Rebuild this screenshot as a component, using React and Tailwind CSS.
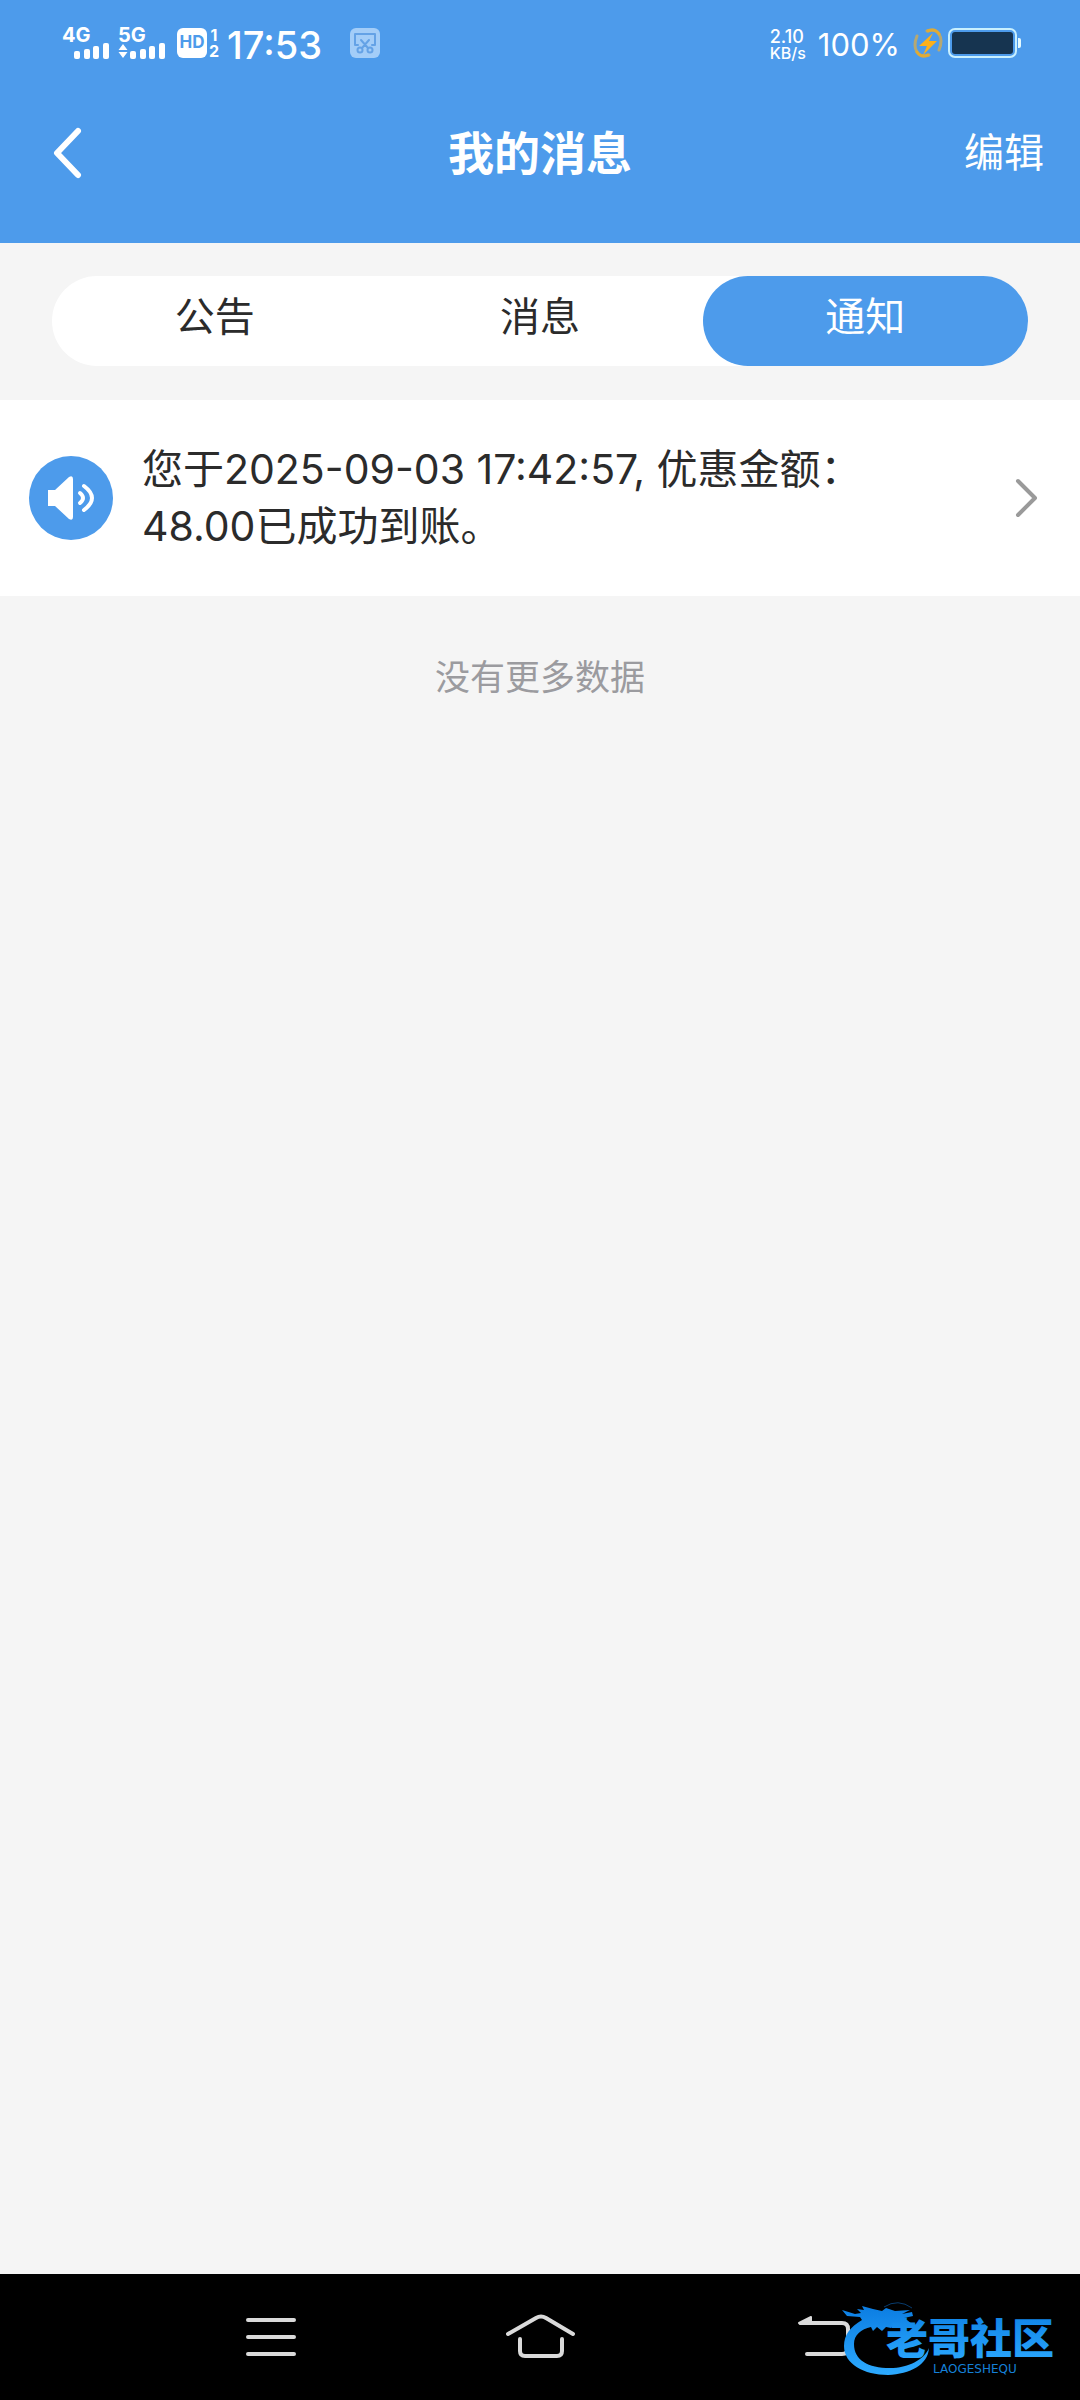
const tabs = ["公告", "消息", "通知"];
const latin = "font-['Inter','Noto_Sans_CJK_SC',sans-serif]";

function Signal({ label, arrows }) {
  return (
    <div className="flex flex-col">
      <span className="h-4 text-[20px] leading-4 font-bold">{label}</span>
      <svg className="h-4 w-12" viewBox="0 0 48 16" fill="currentColor" aria-hidden="true">
        {arrows && <path d="M5 1l4.500 6h-9zM5 15l4.500-6h-9z" />}
        <rect x="12" y="8" width="6" height="8" rx="2" />
        <rect x="22" y="6" width="6" height="10" rx="2" />
        <rect x="31" y="3" width="6" height="13" rx="2" />
        <rect x="41" y="0" width="6" height="16" rx="2" />
      </svg>
    </div>
  );
}

function StatusBar() {
  return (
    <div className="flex h-[86px] items-center justify-between pr-[59px] pl-[62px]">
      <div className="flex items-center">
        <Signal label="4G" />
        <div className="w-2" />
        <Signal label="5G" arrows />
        <span className="ml-[11px] flex size-[30px] items-center justify-center rounded-md bg-white text-[17px] font-bold text-[#4d9beb]">HD</span>
        <span className="ml-[2px] flex flex-col text-center text-[16px] leading-4 font-bold">
          <span>1</span>
          <span>2</span>
        </span>
        <span className="ml-2 pt-1 text-[38px] leading-10 font-medium">17:53</span>
        <svg className="ml-7 size-[30px]" viewBox="0 0 30 30" fill="none" stroke="#64a2e6" strokeWidth="2" strokeLinecap="round" strokeLinejoin="round" aria-hidden="true">
          <rect width="30" height="30" rx="6" fill="#a3cdf8" stroke="none" />
          <path d="M8 17H5V6h20v11h-3M11 12l7 8M19 12l-7 8" />
          <circle cx="10" cy="22" r="2.500" />
          <circle cx="20" cy="22" r="2.500" />
        </svg>
      </div>
      <div className="flex items-center">
        <span className="flex flex-col pt-1 text-[18px] leading-4 font-medium">
          <span>2.10</span>
          <span className="text-[16px]">KB/s</span>
        </span>
        <span className="ml-3 pt-1 text-[31px] leading-10">100%</span>
        <svg className="ml-3 size-8" viewBox="0 0 32 32" fill="none" aria-hidden="true">
          <path d="M15 4Q23 1 27 7t0 16M17 28Q9 31 5 25t0-16" stroke="#b5a873" strokeWidth="3" strokeLinecap="round" />
          <path d="M16 4q7-3 11 3M16 28q-7 3-11-3" stroke="#e0ab35" strokeWidth="3" strokeLinecap="round" />
          <path d="M21 6L7 19h8l-4 9 14-14h-8z" fill="#fcb01b" />
        </svg>
        <svg className="ml-1 h-8 w-[73px]" viewBox="0 0 73 32" fill="none" aria-hidden="true">
          <rect x="1" y="2" width="67" height="28" rx="6" stroke="#c8f0ff" strokeWidth="2" />
          <rect x="4" y="5" width="61" height="22" rx="3" fill="#163450" />
          <path d="M70 11h1q2 0 2 2v6q0 2-2 2h-1z" fill="#e4faff" />
        </svg>
      </div>
    </div>
  );
}

function Watermark() {
  return (
    <div className="pointer-events-none absolute top-6 right-4 h-[78px] w-[224px]">
      <svg className="h-full w-full" viewBox="0 0 224 78" aria-hidden="true">
        <defs>
          <linearGradient id="blue" x1="0" y1="0" x2="0" y2="1">
            <stop offset="0" stopColor="#0b7de2" />
            <stop offset="1" stopColor="#2daaff" />
          </linearGradient>
        </defs>
        <path fill="url(#blue)" d="M22 22C10 29 4 37 4 48 4 66 24 77 48 77 70 76 88 67 89 50 84 62 68 70 50 70 28 70 14 62 14 46 14 37 21 31 31 29L33 33 37 29 42 33 46 29 51 30 53 27 60 25 72 26 67 22 61 22 64 20 73 18 72 14 62 16 70 12 55 13 46 10 42 13 33 11 22 8 24 12 17 11 21 15 15 16 2 12 7 18 20 19z" />
        <path d="M44 9q14-9 28 1" fill="none" stroke="#073b6d" strokeWidth="1" />
        <text x="46" y="56" fill="url(#blue)" fontSize="42" fontWeight="900" fontFamily="'Noto Sans CJK SC', sans-serif">老哥社区</text>
        <text x="93" y="75" fill="#1580d8" fontSize="12" fontFamily="'DejaVu Sans', sans-serif">LAOGESHEQU</text>
      </svg>
    </div>
  );
}

export default function App() {
  return (
    <div className={`flex min-h-screen flex-col bg-[#f5f5f5] text-[#2b2b2b] ${latin}`} lang="zh-CN">
      <header className="h-[243px] bg-[#4d9beb] text-white">
        <StatusBar />
        <div className="grid h-[134px] grid-cols-3 items-center px-9">
          <button type="button" aria-label="返回" className="w-12 pl-4">
            <svg className="h-[52px] w-8" viewBox="0 0 32 52" fill="none" stroke="currentColor" strokeWidth="6" strokeLinecap="round" strokeLinejoin="round">
              <path d="M26 4L5 26l21 22" />
            </svg>
          </button>
          <h1 className="text-center text-[46px] font-bold">我的消息</h1>
          <button type="button" className="justify-self-end text-[40px]">编辑</button>
        </div>
      </header>

      <main className="flex-1">
        <div className="px-[52px] pt-[33px] pb-[34px]">
          <div role="tablist" className="grid h-[90px] grid-cols-3 rounded-full bg-white">
            {tabs.map((tab) => (
              <button
                key={tab}
                type="button"
                role="tab"
                aria-selected={tab === "通知"}
                className="rounded-full pb-2 text-[40px] leading-10 aria-selected:bg-[#4d9beb] aria-selected:text-white"
              >
                {tab}
              </button>
            ))}
          </div>
        </div>

        <button type="button" className="flex h-[196px] w-full items-center bg-white pr-10 pl-7 text-left">
          <svg className="size-[86px] shrink-0" viewBox="0 0 86 86" fill="none" aria-hidden="true">
            <circle cx="43" cy="43" r="42" fill="#4d9beb" />
            <path d="M20 35h7L41 22q4-2 4 2v38q0 4-4 2L27 51h-7z" fill="#fff" />
            <path d="M52 38q6 5 0 10" stroke="#fff" strokeWidth="4" strokeLinecap="round" />
            <path d="M56 31q16 12 0 24" stroke="#fff" strokeWidth="4" strokeLinecap="round" />
          </svg>
          <span className="ml-7 max-w-[720px] flex-1 text-[41px] leading-[57px]">您于2025-09-03 17:42:57, 优惠金额：48.00已成功到账。</span>
          <svg className="ml-auto h-11 w-7" viewBox="0 0 28 44" fill="none" stroke="#9a9a9a" strokeWidth="4" strokeLinecap="round" strokeLinejoin="round" aria-hidden="true">
            <path d="M6 5l17 17L6 39" />
          </svg>
        </button>
        <p className="mt-[55px] text-center text-[35px] leading-[52px] text-[#9b9b9f]">没有更多数据</p>
      </main>

      <nav className="relative grid h-[126px] grid-cols-3 items-center bg-black px-[136px] text-[#dadada]">
        <button type="button" aria-label="最近任务" className="justify-self-center">
          <svg className="h-12 w-14" viewBox="0 0 56 48" stroke="currentColor" strokeWidth="4" strokeLinecap="round">
            <path d="M5 7h46M5 24h46M5 41h46" />
          </svg>
        </button>
        <button type="button" aria-label="主页" className="justify-self-center">
          <svg className="h-12 w-[74px]" viewBox="0 0 74 48" fill="none" stroke="currentColor" strokeWidth="4" strokeLinecap="round">
            <path d="M5 21L33 5q5-3 10 0l27 16M17 26v12q0 5 5 5h32q5 0 5-5V26" />
          </svg>
        </button>
        <button type="button" aria-label="后退" className="justify-self-center pl-7">
          <svg className="h-12 w-14" viewBox="0 0 56 48" fill="none" stroke="currentColor" strokeWidth="4" strokeLinecap="round">
            <path d="M10 10h37q6 0 6 6v19q0 6-6 6H12" />
            <path d="M4 10L16 4v7H5z" fill="currentColor" strokeWidth="2" strokeLinejoin="round" />
          </svg>
        </button>
        <Watermark />
      </nav>
    </div>
  );
}
